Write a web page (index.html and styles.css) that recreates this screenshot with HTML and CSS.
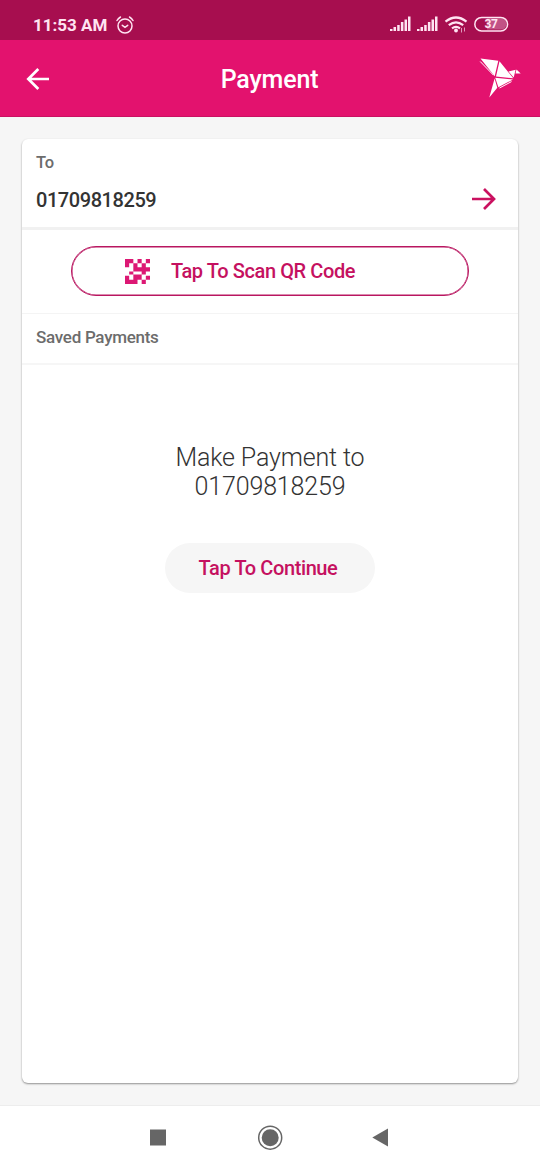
FILE: index.html
```
<!DOCTYPE html>
<html lang="en">
<head>
<meta charset="utf-8">
<title>Payment</title>
<link rel="stylesheet" href="styles.css">
</head>
<body>
<div class="status">
  <span class="time">11:53 AM</span>
  <svg class="alarm" width="18" height="18" viewBox="0 0 18 18"><circle cx="9" cy="10" r="7"/><path d="M1 4.500Q2.200 2.300 4.500 1M17 4.500Q15.800 2.300 13.500 1M6.300 9.300L9 11.300L11.700 9.300"/></svg>
  <svg class="signals" width="120" height="22" viewBox="0 0 120 22">
    <g id="bars"><path d="M0 17V15H2.500V17ZM3.500 17V13H6V17ZM7.200 17V11H9.700V17ZM10.900 17V8H13.400V17ZM14.500 17V5.500H17V17ZM18 17V2.500H20.500V17Z"/></g>
    <use href="#bars" x="27"/>
    <g class="waves"><path d="M55.500 7.700Q66 -.700 76.500 7.700M58.800 11.100Q66 5.500 73.200 11.100M62 14.300Q66 11.500 70 14.300"/></g>
    <circle cx="66" cy="16.500" r="1.900"/>
    <path class="traffic" d="M71.500 14V18.500M74.500 13.500V17.500"/>
    <path class="level" d="M97 4.500H111A5.400 5.400 0 0 1 111 15.500H97Z"/>
    <rect class="battery" x="84.800" y="3.400" width="32.800" height="13.600" rx="6.800"/>
    <text x="101" y="14.400">37</text>
  </svg>
</div>
<header class="bar">
  <svg class="back" width="24" height="24" viewBox="0 0 24 24"><path d="M23 12H3M12.300 2L2.300 12L12.300 22"/></svg>
  <h1>Payment</h1>
  <svg class="bird" width="44" height="44" viewBox="0 0 44 44"><path d="M2.500 1.500L20.300 3.800L16.700 19.300ZM21.500 4.300L35.300 21.300L18 19.600ZM17.200 20.700L35 22.500L20.400 30.200ZM16.600 21.400L19.300 30.700L11.300 40.500ZM30.500 14.500L37.600 12.700L35.700 20.500ZM38.500 12.600L42.700 16.500L37.500 16.500Z"/><path class="crease" d="M2.200 4.500L15.500 18.200M33.500 24.600L21.500 31"/></svg>
</header>
<main>
  <section class="card">
    <div class="recipient">
      <div><div class="label">To</div><div class="number">01709818259</div></div>
      <svg class="next" width="25" height="24" viewBox="0 0 25 24"><path d="M1 12H23M13 2L23 12L13 22"/></svg>
    </div>
    <div class="scan"><button class="scan-button">
      <svg class="qr" width="25" height="25" viewBox="0 0 6 6"><path d="M0 0H2V1H0ZM3 0H4V1H3ZM5 0H6V1H5ZM0 1H1V2H0ZM2 1H3V2H2ZM4 1H5V2H4ZM2 2H6V3H2ZM1 3H2V3.700H1ZM4 3H5V3.700H4ZM0 4H1V5H0ZM2 3.700H4V5H2ZM5 4H6V5H5ZM0 5H3V6H0ZM4 5H5V6H4Z"/></svg>
      <span>Tap To Scan QR Code</span></button></div>
    <div class="saved">Saved Payments</div>
    <div class="content"><p>Make Payment to<br>01709818259</p><button class="continue">Tap To Continue</button></div>
  </section>
</main>
<nav>
  <svg width="540" height="64" viewBox="0 0 540 64"><rect x="150" y="23.500" width="16" height="16"/><circle cx="270.200" cy="31.700" r="8.500"/><circle class="ring" cx="270.200" cy="31.700" r="11.500"/><path d="M388 22.500V40.500L372.300 31.500Z"/></svg>
</nav>
</body>
</html>
```
FILE: styles.css
```
* { box-sizing: border-box; }
body { margin: 0; width: 540px; height: 1170px; display: flex; flex-direction: column; background: #f6f6f6; font-family: Roboto, sans-serif; font-weight: 500; overflow: hidden; }
svg { display: block; flex: none; }
.status { height: 40px; background: #a70e4f; color: #ffe4f2; display: flex; align-items: center; padding: 10px 31px 0 33px; }
.time { font-size: 17px; line-height: 20px; width: 83px; white-space: nowrap; font-weight: 700; }
.alarm { fill: none; stroke: #ffe4f2; stroke-width: 1.500; stroke-linecap: round; }
.signals { margin-left: auto; width: 120px; margin-right: -1px; fill: #ffe4f2; }
.waves { fill: none; stroke: #ffe4f2; stroke-width: 2.200; }
.traffic { stroke: #df9abc; stroke-width: 1; }
.level { fill: #c25285; }
.battery { fill: none; stroke: #ffe4f2; stroke-width: 1.500; }
.signals text { font-size: 12px; font-weight: 700; text-anchor: middle; letter-spacing: -.5px; }
.bar { height: 77px; background: #e3126e; color: #fff; display: grid; grid-template-columns: 60px 1fr 60px; align-items: center; border-bottom: 1px solid #c91162; padding-top: 2px; }
.back { margin-left: 26px; fill: none; stroke: #fff; stroke-width: 2.700; }
.bar h1 { margin: 2px 1px 0 0; font-size: 25px; letter-spacing: -.15px; line-height: 30px; font-weight: 500; text-align: center; }
.bird { margin-left: -2px; fill: #fff; }
.crease { fill: none; stroke: #fff; stroke-width: 1; }
main { flex: 1; padding: 22px; }
.card { height: 944px; background: #fff; border-radius: 6px; box-shadow: 0 1px 2px rgba(0,0,0,.42); }
.recipient { height: 91px; border-bottom: 3px solid #f1f1f1; padding: 14px 22px 0 14px; display: flex; justify-content: space-between; }
.label { font-size: 16.500px; line-height: 20px; color: #6c6c6c; letter-spacing: -.1px; }
.number { margin-top: 16px; font-size: 20px; letter-spacing: -.43px; line-height: 22px; color: #333; }
.next { margin-top: 34px; fill: none; stroke: #ca1160; stroke-width: 2.700; }
.scan { height: 84px; padding-top: 16px; border-bottom: 1.500px solid #f4f4f4; }
button { font: 500 20px/24px Roboto, sans-serif; letter-spacing: -.4px; color: #c51160; padding: 0; }
.scan-button { display: flex; align-items: center; width: 398px; height: 50px; margin-left: 49px; padding-left: 53px; gap: 21px; background: #fff; border: 1px solid #b91660; box-shadow: inset 0 0 0 .5px #b91660; border-radius: 25px; }
.scan-button span { padding-bottom: 1px; }
.qr { fill: #dc1874; }
.saved { height: 51px; padding: 13px 14px; border-bottom: 2px solid #f6f6f6; font-size: 17px; letter-spacing: -.28px; line-height: 20px; color: #6c6c6c; }
.content { padding-top: 78px; display: flex; flex-direction: column; align-items: center; }
.content p { margin: 0; font-size: 25px; letter-spacing: -.15px; line-height: 29px; font-weight: 300; text-align: center; color: #333; }
.continue { margin-top: 42px; width: 210px; height: 50px; border: 0; border-radius: 25px; background: #f6f6f6; padding: 0 4px 1px 0; }
nav { height: 65px; background: #fff; border-top: 1px solid #ededed; }
nav svg { fill: #666; }
.ring { fill: none; stroke: #666; stroke-width: 1.500; }
```
